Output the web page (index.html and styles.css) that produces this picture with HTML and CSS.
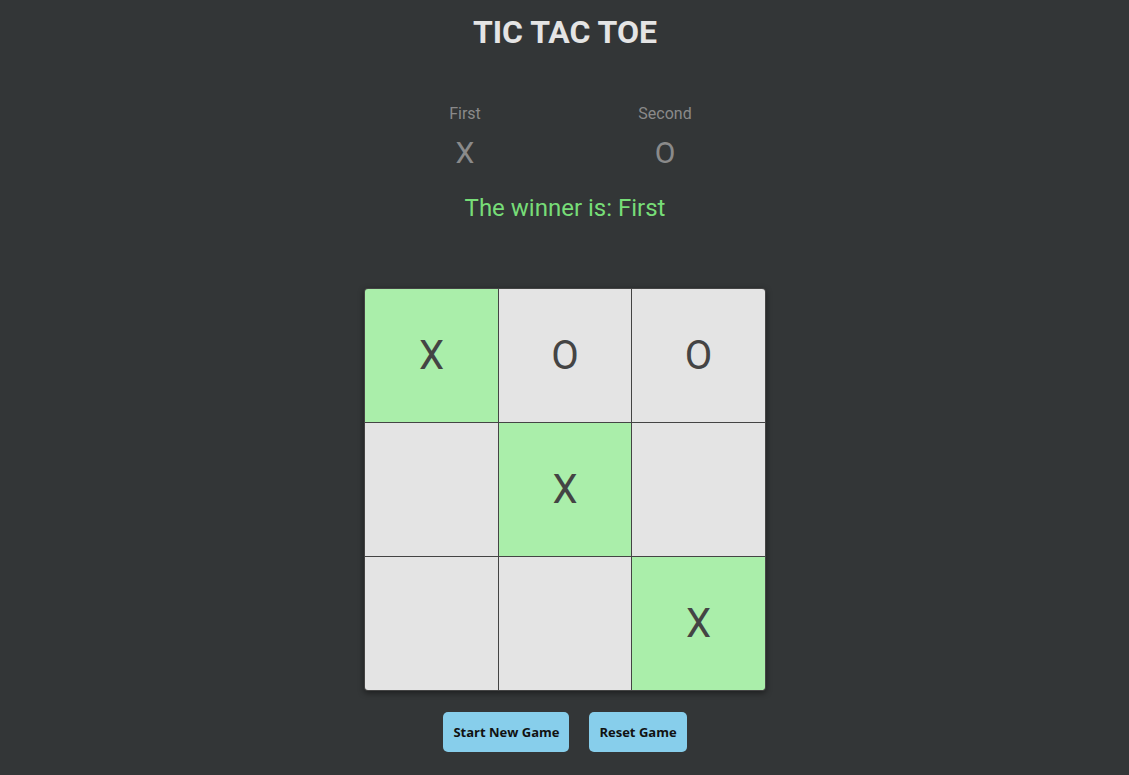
FILE: index.html
```html
<!DOCTYPE html>
<html>
<head>
<meta charset="utf-8">
<link rel="stylesheet" href="styles.css">
</head>
<body>
<div class="app">
  <h1 class="title">TIC TAC TOE</h1>
  <div class="players">
    <div class="player">
      <div class="player-name">First</div>
      <div class="player-mark">X</div>
    </div>
    <div class="player">
      <div class="player-name">Second</div>
      <div class="player-mark">O</div>
    </div>
  </div>
  <div class="winner">The winner is: First</div>
  <div class="board">
    <div class="cell win">X</div>
    <div class="cell">O</div>
    <div class="cell">O</div>
    <div class="cell"></div>
    <div class="cell win">X</div>
    <div class="cell"></div>
    <div class="cell"></div>
    <div class="cell"></div>
    <div class="cell win">X</div>
  </div>
  <div class="actions">
    <button class="btn">Start New Game</button>
    <button class="btn">Reset Game</button>
  </div>
</div>
</body>
</html>
```
FILE: styles.css
```css
* { box-sizing: border-box; }
html, body {
  margin: 0;
  padding: 0;
  background: #333637;
  height: 100%;
}
body {
  font-family: Roboto, "Liberation Sans", sans-serif;
}
.app {
  display: flex;
  flex-direction: column;
  align-items: center;
  padding-left: 1px;
}
.title {
  margin: 14px 0 0;
  font-size: 32px;
  line-height: 36px;
  font-weight: 700;
  color: #e4e4e4;
}
.players {
  display: flex;
  gap: 100px;
  margin-top: 54px;
}
.player {
  width: 100px;
  text-align: center;
}
.player-name {
  font-size: 16px;
  line-height: 20px;
  color: #8a8a8a;
}
.player-mark {
  margin-top: 11px;
  font-size: 30px;
  line-height: 36px;
  color: #8a8a8a;
}
.winner {
  margin-top: 22px;
  font-size: 24px;
  line-height: 30px;
  color: #77dd77;
}
.board {
  margin-top: 65px;
  display: grid;
  grid-template-columns: 133px 132px 133px;
  grid-auto-rows: 133px;
  gap: 1px;
  padding: 1px;
  background: #444;
  border-radius: 4px;
  box-shadow: 0 2px 6px rgba(0, 0, 0, 0.45);
}
.cell {
  background: #e4e4e4;
  display: flex;
  align-items: center;
  justify-content: center;
  font-size: 40px;
  color: #444;
}
.cell.win { background: #aaeeaa; }
.board .cell:nth-child(1) { border-top-left-radius: 3px; }
.board .cell:nth-child(3) { border-top-right-radius: 3px; }
.board .cell:nth-child(7) { border-bottom-left-radius: 3px; }
.board .cell:nth-child(9) { border-bottom-right-radius: 3px; }
.actions {
  display: flex;
  gap: 20px;
  margin-top: 21px;
}
.btn {
  background: #87ceeb;
  border: none;
  border-radius: 5px;
  height: 40px;
  padding: 0 10px;
  font-family: "Open Sans", sans-serif;
  font-weight: 700;
  font-size: 13px;
  color: #111;
}
```
